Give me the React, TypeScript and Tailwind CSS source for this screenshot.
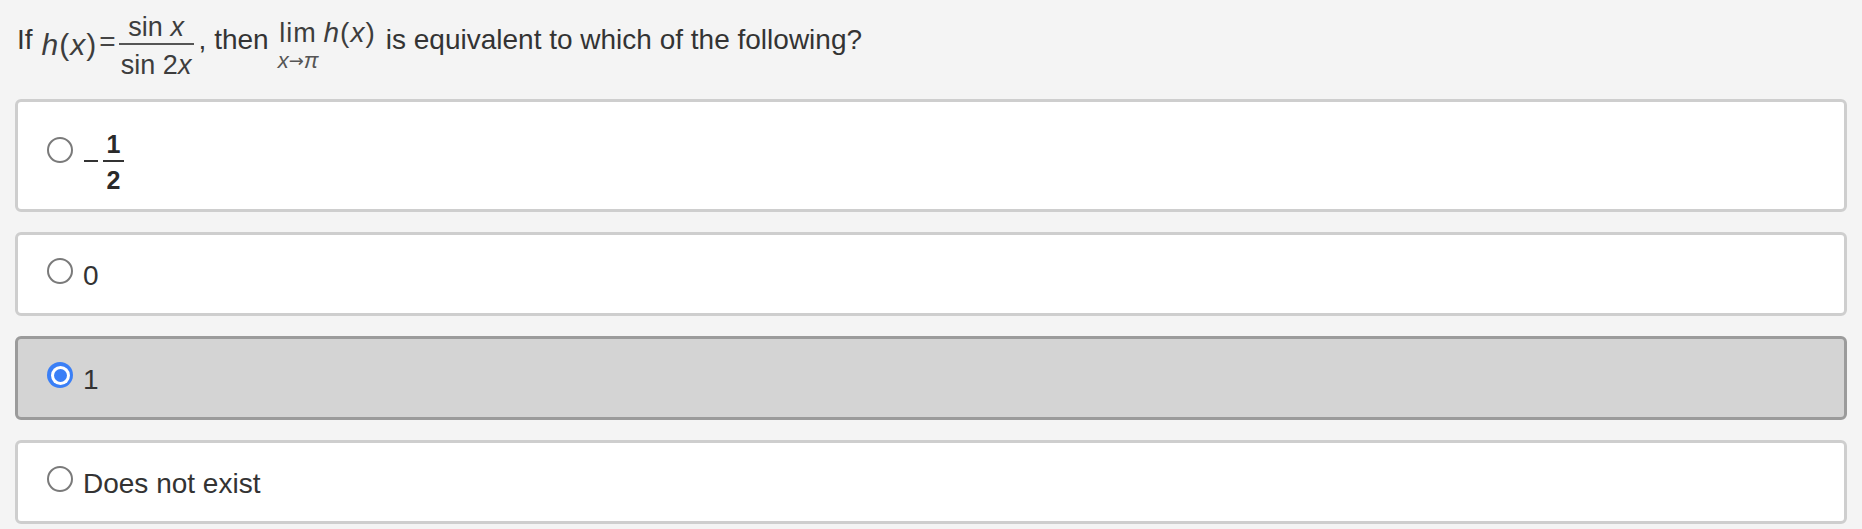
import React from 'react'

const answers = [
  { id: 'a', label: null as string | null },
  { id: 'b', label: '0' },
  { id: 'c', label: '1' },
  { id: 'd', label: 'Does not exist' },
]

function Radio({ checked }: { checked: boolean }) {
  if (checked) {
    return (
      <div className="w-[26px] h-[26px] shrink-0 rounded-full bg-[#3a7ff6] flex items-center justify-center">
        <div className="w-[19px] h-[19px] rounded-full bg-white flex items-center justify-center">
          <div className="w-[13px] h-[13px] rounded-full bg-[#3a7ff6]" />
        </div>
      </div>
    )
  }
  return <div className="w-[26px] h-[26px] shrink-0 rounded-full border-2 border-[#7a7a7a] bg-white" />
}

export default function App() {
  const selected = 'c'

  return (
    <div className="min-h-screen bg-[#f4f4f4] px-[15px] text-[#333]" style={{ fontFamily: '"Liberation Sans", Arial, sans-serif' }}>

      {/* question */}
      <div className="flex items-start h-[79px] pl-[2px] mb-[20px]">
        <span className="text-[28px] leading-[28px] mt-[26px]">If</span>
        <span className="text-[30px] leading-[30px] mt-[30px] ml-[9px] text-[#3d3d3d] tracking-[1px]">
          <i>h</i>(<i>x</i>)
        </span>
        <span className="text-[28px] leading-[28px] mt-[28px] ml-[2px] text-[#444]">=</span>
        <div className="flex flex-col items-center mt-[14px] ml-[3px] text-[#3d3d3d]">
          <span className="text-[27px] leading-[27px]">sin <i>x</i></span>
          <div className="h-[2px] w-[75px] bg-[#555] mt-[2px]" />
          <span className="text-[27px] leading-[27px] mt-[7px]">sin 2<i>x</i></span>
        </div>
        <span className="text-[28px] leading-[28px] mt-[26px] ml-[5px] whitespace-pre">, then</span>
        <div className="flex flex-col items-center mt-[20px] ml-[9px] text-[#3d3d3d]">
          <span className="text-[27px] leading-[27px] tracking-[1px]">lim</span>
          <span className="text-[22px] leading-[22px] mt-[3px] text-[#555] flex items-center">
            <i>x</i>
            <span className="text-[18px]" style={{ fontFamily: '"DejaVu Sans", sans-serif' }}>→</span>
            <i>π</i>
          </span>
        </div>
        <span className="text-[28px] leading-[28px] mt-[19px] ml-[5px] text-[#3d3d3d] tracking-[1px]">
          <i>h</i>(<i>x</i>)
        </span>
        <span className="text-[28px] leading-[28px] mt-[26px] ml-[10px]">is equivalent to which of the following?</span>
      </div>

      {/* answers */}
      <div className="flex flex-col gap-[20px]">
        {answers.map(a => {
          const isSel = a.id === selected
          return (
            <div
              key={a.id}
              className={
                isSel
                  ? 'rounded-[6px] border-[3px] border-[#9b9b9b] bg-[#d4d4d4]'
                  : 'rounded-[6px] border-[3px] border-[#cecece] bg-white'
              }
            >
              {a.label === null ? (
                <div className="flex items-start pl-[29px] pt-[30px] pb-[16px]">
                  <div className="mt-[5px]">
                    <Radio checked={isSel} />
                  </div>
                  <div className="w-[14px] h-[2px] bg-[#333] ml-[11px] mt-[28px]" />
                  <div className="flex flex-col items-center ml-[5px] w-[21px] text-[#2a2a2a] font-bold">
                    <span className="text-[25px] leading-[25px]">1</span>
                    <div className="h-[2px] w-[21px] bg-[#333] mt-[3px]" />
                    <span className="text-[25px] leading-[25px] mt-[6px]">2</span>
                  </div>
                </div>
              ) : (
                <div className="flex items-start pl-[29px] pt-[23px] pb-[21px]">
                  <Radio checked={isSel} />
                  <span className="text-[28px] leading-[32px] mt-[2px] ml-[10px]">{a.label}</span>
                </div>
              )}
            </div>
          )
        })}
      </div>

    </div>
  )
}
